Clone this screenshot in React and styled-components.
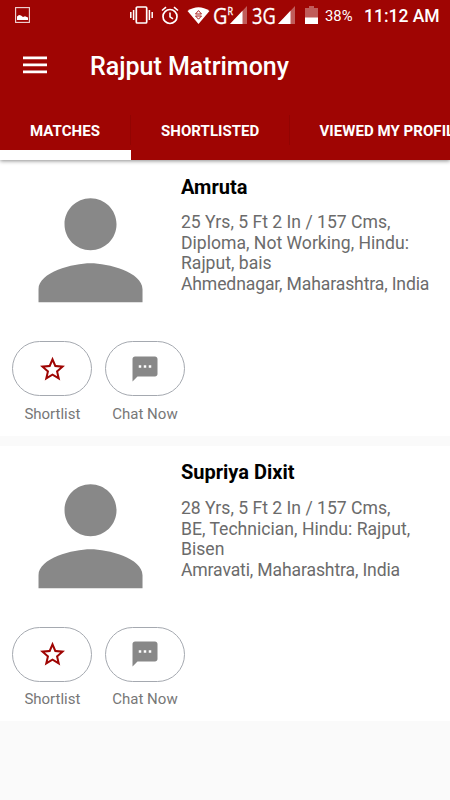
import React from "react";
import styled, { createGlobalStyle } from "styled-components";

const Global = createGlobalStyle`
  * { box-sizing: border-box; }
  body { margin: 0; background: #fafafa; font-family: Roboto, sans-serif; overflow: hidden; }
  svg { display: block; flex: none; }
`;

const Screen = styled.div`
  width: 450px;
  height: 800px;
  overflow: hidden;
  background: #fafafa;
`;

const Header = styled.header`
  position: relative;
  height: 160px;
  background: #9f0503;
  color: #fff;
  box-shadow: 0 1px 4px rgba(0, 0, 0, 0.45);
`;

const StatusBar = styled.div`
  display: flex;
  align-items: center;
  height: 32px;
  padding-left: 15px;
`;

const StatusIcon = styled.svg`
  margin-left: ${(p) => p.$gap || 0}px;
  margin-top: ${(p) => p.$drop || 0}px;
`;

const StatusText = styled.span`
  flex: none;
  margin-left: ${(p) => p.$gap || 0}px;
  font-size: ${(p) => p.$size}px;
  font-weight: ${(p) => p.$weight || 400};
  width: ${(p) => p.$width}px;
  line-height: 32px;
  white-space: nowrap;
`;

const Network = styled(StatusText)`
  font-family: "Open Sans", sans-serif;
  margin-top: -3px;
  -webkit-text-stroke: 0.3px #fff;
  transform: scaleX(${(p) => p.$scale});
  transform-origin: left;
`;

const Roaming = styled.sup`
  font-size: 10px;
  line-height: 0;
  vertical-align: 9px;
`;

const AppBar = styled.div`
  display: flex;
  align-items: center;
  height: 68px;
  padding-left: 23px;
`;

const MenuButton = styled.button`
  display: flex;
  width: 24px;
  margin-top: -2px;
  padding: 0;
  border: 0;
  background: none;
  color: inherit;
`;

const Title = styled.h1`
  margin: 1px 0 0 43px;
  font-size: 25px;
  font-weight: 500;
  line-height: 30px;
  white-space: nowrap;
`;

const Tabs = styled.nav`
  display: flex;
  height: 60px;
  overflow: hidden;
`;

const Tab = styled.button`
  position: relative;
  flex: none;
  width: ${(p) => p.$width}px;
  height: 60px;
  padding: 12px 0 0 30px;
  border: 0;
  border-bottom: ${(p) => (p.$active ? "10px solid #fff" : "10px solid transparent")};
  background: none;
  color: #fff;
  font: 700 15px/38px Roboto, sans-serif;
  letter-spacing: 0.05px;
  text-align: left;
  white-space: nowrap;

  &::after {
    content: "";
    position: absolute;
    right: 0;
    top: 15px;
    width: 1px;
    height: 30px;
    background: #920402;
  }
`;

const Card = styled.article`
  height: 275.7px;
  margin-bottom: 10px;
  padding: 12px 12px 0 12.4px;
  background: #fff;
`;

const Profile = styled.div`
  display: flex;
  height: 169.2px;
`;

const Info = styled.div`
  margin-left: 12.6px;
`;

const Name = styled.h2`
  margin: 3.6px 0 13.7px;
  font-size: 20px;
  font-weight: 700;
  line-height: 23px;
  color: #000;
`;

const Details = styled.p`
  margin: 0;
  font-size: 17.6px;
  line-height: 20.6px;
  color: #6b6b6b;
  white-space: pre;
`;

const Location = styled(Details)`
  letter-spacing: -0.14px;
`;

const Actions = styled.div`
  display: flex;
  gap: 12.6px;
`;

const Action = styled.div`
  width: 80px;
  text-align: center;
`;

const Pill = styled.button`
  display: flex;
  align-items: center;
  justify-content: center;
  width: 80px;
  height: 55px;
  padding: 0;
  border: 1px solid #a5a9b0;
  border-radius: 28px;
  background: #fff;
`;

const Label = styled.div`
  margin-top: 8.6px;
  font-size: 15px;
  line-height: 18px;
  color: #777;
`;

const PersonIcon = () => (
  <svg width="156" height="156" viewBox="-0.08 -0.04 24 24" fill="#888">
    <path d="M12 12c2.21 0 4-1.79 4-4s-1.79-4-4-4-4 1.79-4 4 1.79 4 4 4zm0 2c-2.67 0-8 1.34-8 4v2h16v-2c0-2.66-5.33-4-8-4z" />
  </svg>
);

const StarIcon = () => (
  <svg width="30" height="30" viewBox="-0.4 -0.2 24 24" fill="#9f0503">
    <path d="M22 9.24l-7.19-.62L12 2 9.19 8.63 2 9.24l5.46 4.73L5.82 21 12 17.27 18.18 21l-1.63-7.03L22 9.24zM12 15.4l-3.76 2.27 1-4.28-3.32-2.88 4.38-.38L12 6.1l1.71 4.04 4.38.38-3.32 2.88 1 4.28L12 15.4z" />
  </svg>
);

const ChatIcon = () => (
  <svg width="30" height="30" viewBox="0 0 24 24" fill="#888">
    <path d="M20 2H4c-1.1 0-1.99.9-1.99 2L2 22l4-4h14c1.1 0 2-.9 2-2V4c0-1.1-.9-2-2-2zM9 11H7V9h2v2zm4 0h-2V9h2v2zm4 0h-2V9h2v2z" />
  </svg>
);

const Signal = ({ gap }) => (
  <StatusIcon $gap={gap} $drop={-2} width="17" height="18" viewBox="0 0 17 18">
    <path d="M17 0V18H0z" fill="#fff" opacity=".35" />
    <path d="M12.5 4.8V18H0z" fill="#fff" />
  </StatusIcon>
);

const people = [
  {
    name: "Amruta",
    details: "25 Yrs, 5 Ft 2 In / 157 Cms,\nDiploma, Not Working, Hindu:\nRajput, bais",
    location: "Ahmednagar, Maharashtra, India",
  },
  {
    name: "Supriya Dixit",
    details: "28 Yrs, 5 Ft 2 In / 157 Cms,\nBE, Technician, Hindu: Rajput,\nBisen",
    location: "Amravati, Maharashtra, India",
  },
];

const ProfileCard = ({ name, details, location }) => (
  <Card>
    <Profile>
      <PersonIcon />
      <Info>
        <Name>{name}</Name>
        <Details>{details}</Details>
        <Location>{location}</Location>
      </Info>
    </Profile>
    <Actions>
      <Action>
        <Pill aria-label="Shortlist"><StarIcon /></Pill>
        <Label>Shortlist</Label>
      </Action>
      <Action>
        <Pill aria-label="Chat Now"><ChatIcon /></Pill>
        <Label>Chat Now</Label>
      </Action>
    </Actions>
  </Card>
);

export default function App() {
  return (
    <Screen>
      <Global />
      <Header>
        <StatusBar>
          <StatusIcon $drop={-2} width="15" height="16" viewBox="0 0 15 16">
            <rect x=".6" y=".6" width="13.8" height="14.8" fill="none" stroke="#fff" strokeWidth="1.1" opacity=".85" />
            <path d="M2 13V9.5L4 8l2 .5L8 10l2-.7 3 1.2V13z" fill="#fff" />
          </StatusIcon>
          <StatusIcon $gap={100} $drop={-2} width="23" height="18" viewBox="0 0 23 18">
            <rect x="6.3" y="1" width="10.4" height="16" rx="1" fill="none" stroke="#fff" strokeWidth="1.7" />
            <path d="M.8 6v6M3.6 4v10M19.4 4v10M22.2 6v6" stroke="#fff" strokeWidth="1.5" />
          </StatusIcon>
          <StatusIcon $gap={8} $drop={-2} width="18" height="19" viewBox="0 0 18 19" fill="none" stroke="#fff">
            <circle cx="9" cy="10.5" r="7" strokeWidth="1.7" />
            <path d="M9 6.5v4.3l3 2M1 4.5l4-3.4M17 4.5l-4-3.4" strokeWidth="1.6" />
          </StatusIcon>
          <StatusIcon $gap={8} $drop={-1} width="23" height="17" viewBox="0 0 23 17">
            <path d="M.5 4Q11.5-3.5 22.5 4L11.5 17z" fill="#fff" />
            <path d="M8.5 7l3-3.4 3 3.4zM8.5 9h6l-3 3.2z" fill="none" stroke="#9f0503" strokeWidth=".9" />
          </StatusIcon>
          <Network $gap={3} $size={22} $width={17} $scale={0.9}>G<Roaming>R</Roaming></Network>
          <Signal gap={0} />
          <Network $gap={5} $size={22} $width={25} $scale={0.83}>3G</Network>
          <Signal gap={1} />
          <StatusIcon $gap={10} $drop={-2} width="13" height="18" viewBox="0 0 13 18" fill="#fff">
            <path d="M0 2h4V0h5v2h4v10H0z" opacity=".35" />
            <path d="M0 11.5h13V18H0z" />
          </StatusIcon>
          <StatusText $gap={7} $size={14.8} $width={31}>38%</StatusText>
          <StatusText $gap={8} $size={17.5} $weight={500} $width={80}>11:12 AM</StatusText>
        </StatusBar>
        <AppBar>
          <MenuButton aria-label="Menu">
            <svg width="24" height="18" viewBox="0 0 24 18" fill="currentColor">
              <path d="M0 .5h24v2.7H0zM0 7.5h24v2.7H0zM0 14.5h24v2.7H0z" />
            </svg>
          </MenuButton>
          <Title>Rajput Matrimony</Title>
        </AppBar>
        <Tabs>
          <Tab $width={131} $active>MATCHES</Tab>
          <Tab $width={158.5}>SHORTLISTED</Tab>
          <Tab $width={220}>VIEWED MY PROFILE</Tab>
        </Tabs>
      </Header>
      <main>
        {people.map((p) => (
          <ProfileCard key={p.name} {...p} />
        ))}
      </main>
    </Screen>
  );
}
